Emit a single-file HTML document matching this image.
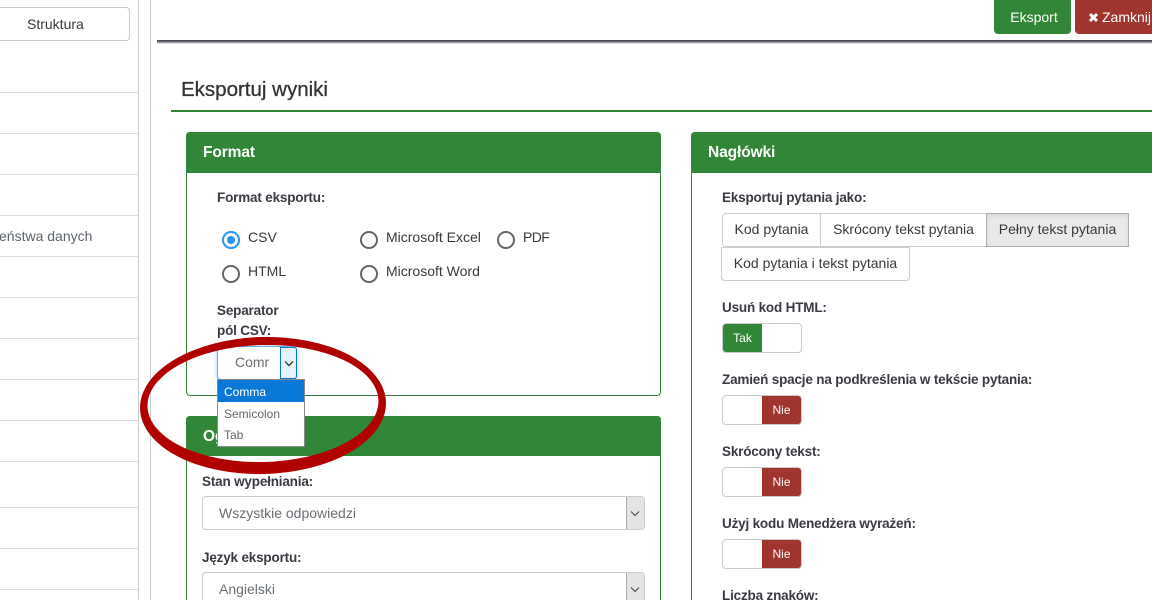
<!DOCTYPE html>
<html lang="pl"><head><meta charset="utf-8"><title>Eksportuj wyniki</title>
<style>
html,body{margin:0;padding:0;background:#fff;width:1152px;height:600px;overflow:hidden}
#w{width:1152px;height:600px;position:relative;overflow:hidden;font-family:"Liberation Sans",sans-serif;font-size:14px;color:#373a3c}
.a{position:absolute;box-sizing:border-box}
.t{position:absolute;white-space:nowrap;line-height:16px}
.b{font-weight:bold;color:#3a3a44;font-size:13.5px;letter-spacing:-.18px}
.hl{position:absolute;left:0;width:138px;height:1px;background:#ddd}
.head{background:#328637;border-radius:4px 4px 0 0;color:#fff;font-weight:bold;font-size:15.5px;letter-spacing:-.1px}
.panel{border:1px solid #328637;border-radius:4px;background:#fff}
.radio{position:absolute;width:18px;height:18px;border:2px solid #666;border-radius:50%;box-sizing:border-box;background:#fff}
.radio.on{border-color:#2196f3}
.radio.on:after{content:"";position:absolute;left:3px;top:3px;width:8px;height:8px;background:#2196f3;border-radius:50%}
.btn{position:absolute;box-sizing:border-box;height:34px;border:1px solid #ccc;background:#fff;color:#373a3c;text-align:center;line-height:31px;white-space:nowrap}
.sw{position:absolute;left:722px;width:80px;height:30px;border:1px solid #ccc;border-radius:4px;box-sizing:border-box;background:#fff;overflow:hidden}
.sw i{position:absolute;top:0;bottom:0;width:39px;font-style:normal;color:#fff;font-size:12px;text-align:center;line-height:28px}
.sel{position:absolute;box-sizing:border-box;left:202px;width:443px;height:34px;border:1px solid #ccc;border-radius:4px;background:#fff;color:#6a6f74}
.sel span{position:absolute;left:16px;top:8px;line-height:16px;white-space:nowrap}
.sel b{position:absolute;right:0;top:0;bottom:0;width:17px;background:#e4e4e4;border-left:1px solid #aaa;border-radius:0 3px 3px 0}
.sel svg{position:absolute;left:3px;top:13px}
</style></head><body><div id="w">

<!-- sidebar -->
<div class="a" style="left:-10px;top:7px;width:140px;height:34px;border:1px solid #ccc;border-radius:4px;background:#fff"></div>
<div class="t" style="left:27px;top:16px;color:#373a3c">Struktura</div>
<div class="hl" style="top:92px"></div><div class="hl" style="top:133px"></div><div class="hl" style="top:174px"></div>
<div class="hl" style="top:215px"></div><div class="hl" style="top:256px"></div><div class="hl" style="top:297px"></div>
<div class="hl" style="top:338px"></div><div class="hl" style="top:379px"></div><div class="hl" style="top:420px"></div>
<div class="hl" style="top:461px"></div><div class="hl" style="top:507px"></div><div class="hl" style="top:548px"></div><div class="hl" style="top:589px"></div>
<div class="t" style="left:-1px;top:228px;color:#5e646b">eństwa danych</div>
<div class="a" style="left:138px;top:0;width:1px;height:600px;background:#ccc"></div>
<div class="a" style="left:150px;top:0;width:1px;height:600px;background:#ccc"></div>

<!-- top bar -->
<div class="a" style="left:157px;top:40px;width:995px;height:4px;background:linear-gradient(#3e3e46,#62626c 40%,#c4c4cc 75%,#fff)"></div>
<div class="a" style="left:994px;top:-4px;width:77px;height:38px;background:#328637;border-radius:4px;color:#fff;text-align:center;line-height:42px;padding-left:3px">Eksport</div>
<div class="a" style="left:1075px;top:-4px;width:90px;height:38px;background:#a0342e;border-radius:4px"></div>
<svg class="a" style="left:1088px;top:12px" width="11" height="11" viewBox="0 0 11 11"><path d="M2 2L9 9M9 2L2 9" stroke="#fff" stroke-width="3"/></svg>
<div class="t" style="left:1102px;top:9px;color:#fff">Zamknij</div>

<!-- title -->
<div class="t" style="left:181px;top:79px;font-size:20.5px;line-height:22px;font-weight:normal;color:#333;-webkit-text-stroke:.3px #333">Eksportuj wyniki</div>
<div class="a" style="left:171px;top:110px;width:981px;height:2px;background:#328637"></div>

<!-- Format panel -->
<div class="a panel" style="left:186px;top:132px;width:475px;height:264px"></div>
<div class="a head" style="left:186px;top:132px;width:475px;height:41px;padding:12px 0 0 17px;line-height:17px">Format</div>
<div class="t b" style="left:217px;top:190px">Format eksportu:</div>
<div class="radio on" style="left:222px;top:231px"></div><div class="t" style="left:248px;top:229px">CSV</div>
<div class="radio" style="left:360px;top:231px"></div><div class="t" style="left:386px;top:229px">Microsoft Excel</div>
<div class="radio" style="left:497px;top:231px"></div><div class="t" style="left:523px;top:229px;letter-spacing:-.6px">PDF</div>
<div class="radio" style="left:222px;top:265px"></div><div class="t" style="left:248px;top:263px">HTML</div>
<div class="radio" style="left:360px;top:265px"></div><div class="t" style="left:386px;top:263px">Microsoft Word</div>
<div class="t b" style="left:217px;top:303px">Separator</div>
<div class="t b" style="left:217px;top:323px">pól CSV:</div>
<div class="a" style="left:217px;top:346px;width:80px;height:34px;border:1px solid #66afe9;border-radius:4px;background:#fff;box-shadow:0 0 5px rgba(102,175,233,.6)"></div>
<div class="t" style="left:235px;top:354px;color:#6a6f74;width:34px;overflow:hidden">Comma</div>
<div class="a" style="left:280px;top:347px;width:17px;height:32px;background:#e6f1fa;border:1px solid #0a78d0;border-radius:0 3px 3px 0"></div>
<svg class="a" style="left:284px;top:360px" width="10" height="7" viewBox="0 0 10 7"><path d="M1 1.5L5 5.5L9 1.5" fill="none" stroke="#222" stroke-width="1.2"/></svg>

<!-- Ogólne panel -->
<div class="a panel" style="left:186px;top:416px;width:475px;height:200px"></div>
<div class="a head" style="left:186px;top:416px;width:475px;height:40px;padding:12px 0 0 17px;line-height:17px">Ogólne</div>
<div class="t b" style="left:202px;top:474px">Stan wypełniania:</div>
<div class="sel" style="top:496px"><span>Wszystkie odpowiedzi</span><b><svg width="10" height="7" viewBox="0 0 10 7"><path d="M1 1.5L5 5.5L9 1.5" fill="none" stroke="#444" stroke-width="1"/></svg></b></div>
<div class="t b" style="left:202px;top:550px">Język eksportu:</div>
<div class="sel" style="top:572px"><span>Angielski</span><b><svg width="10" height="7" viewBox="0 0 10 7"><path d="M1 1.5L5 5.5L9 1.5" fill="none" stroke="#444" stroke-width="1"/></svg></b></div>

<!-- dropdown -->
<div class="a" style="left:217px;top:379px;width:88px;height:68px;background:#fff;border:1px solid #8a8a8a;font-size:12px;color:#666">
<div style="height:22px;background:#0a78d7;color:#fff;line-height:24px;padding-left:6px">Comma</div>
<div style="height:22px;line-height:24px;padding-left:6px">Semicolon</div>
<div style="height:22px;line-height:23px;padding-left:6px">Tab</div>
</div>

<!-- red ellipse -->
<svg class="a" style="left:0;top:0;pointer-events:none" width="1152" height="600" viewBox="0 0 1152 600">
<path fill="#b00000" fill-rule="evenodd" transform="rotate(-1.5 263 405)" d="M140 405.5a123 68.5 0 1 0 246 0a123 68.5 0 1 0 -246 0ZM147.500 403.500a115.500 58.500 0 1 1 231 0a115.500 58.500 0 1 1 -231 0Z"/>
</svg>

<!-- Nagłówki panel -->
<div class="a panel" style="left:691px;top:132px;width:480px;height:490px"></div>
<div class="a head" style="left:691px;top:132px;width:480px;height:41px;padding:12px 0 0 17px;line-height:17px">Nagłówki</div>
<div class="t b" style="left:722px;top:190px">Eksportuj pytania jako:</div>
<div class="btn" style="left:722px;top:213px;width:99px;border-radius:4px 0 0 4px">Kod pytania</div>
<div class="btn" style="left:820px;top:213px;width:167px">Skrócony tekst pytania</div>
<div class="btn" style="left:986px;top:213px;width:143px;background:#e9e9e9;border-color:#adadad;box-shadow:inset 0 2px 4px rgba(0,0,0,.08)">Pełny tekst pytania</div>
<div class="btn" style="left:721px;top:247px;width:189px;border-radius:0 0 4px 4px">Kod pytania i tekst pytania</div>

<div class="t b" style="left:722px;top:300px">Usuń kod HTML:</div>
<div class="sw" style="top:323px"><i style="left:0;background:#328637">Tak</i></div>
<div class="t b" style="left:722px;top:372px">Zamień spacje na podkreślenia w tekście pytania:</div>
<div class="sw" style="top:395px"><i style="right:0;background:#a0342e">Nie</i></div>
<div class="t b" style="left:722px;top:444px">Skrócony tekst:</div>
<div class="sw" style="top:467px"><i style="right:0;background:#a0342e">Nie</i></div>
<div class="t b" style="left:722px;top:516px">Użyj kodu Menedżera wyrażeń:</div>
<div class="sw" style="top:539px"><i style="right:0;background:#a0342e">Nie</i></div>
<div class="t b" style="left:722px;top:588px">Liczba znaków:</div>

</div></body></html>
